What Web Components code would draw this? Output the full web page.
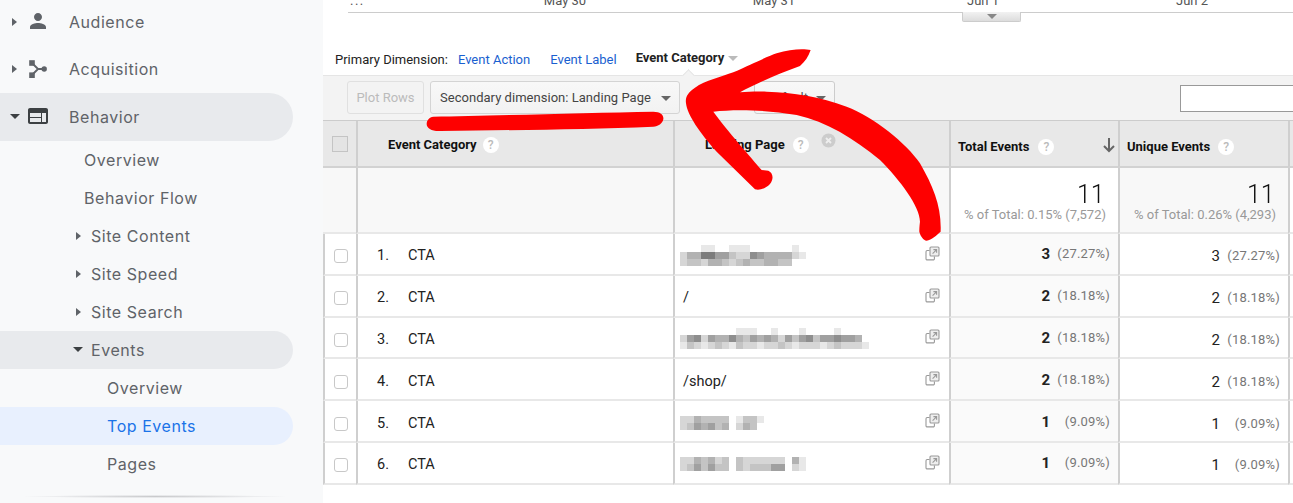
<!DOCTYPE html>
<html><head><meta charset="utf-8"><style>
html,body{margin:0;padding:0;height:503px;overflow:hidden;background:#fff}
body{display:flex;font-family:Roboto,"Liberation Sans",sans-serif;position:relative}
</style></head><body>
<ga-sidebar>
<ga-nav caret="right" icon="person" indent="0">Audience</ga-nav>
<ga-nav caret="right" icon="acq" indent="0">Acquisition</ga-nav>
<ga-nav caret="down" icon="web" indent="0" state="open">Behavior</ga-nav>
<ga-nav sub indent="84">Overview</ga-nav>
<ga-nav sub indent="84">Behavior Flow</ga-nav>
<ga-nav sub caret="right" indent="74">Site Content</ga-nav>
<ga-nav sub caret="right" indent="74">Site Speed</ga-nav>
<ga-nav sub caret="right" indent="74">Site Search</ga-nav>
<ga-nav sub caret="down" indent="72" state="open">Events</ga-nav>
<ga-nav sub indent="107">Overview</ga-nav>
<ga-nav sub indent="107" state="active">Top Events</ga-nav>
<ga-nav sub indent="107">Pages</ga-nav>
</ga-sidebar>
<ga-main>
<ga-axis></ga-axis>
<ga-dimensions></ga-dimensions>
<ga-toolbar></ga-toolbar>
<ga-table>
<ga-row n="1" m="3" p="27.27" mosaic="000110011100000010|244775532265444421|233244323433443300"></ga-row>
<ga-row n="2" m="2" p="18.18" page="/"></ga-row>
<ga-row n="3" m="2" p="18.18" mosaic="0000000011100100010000100000|2562544643545425356355655400|1321232132212232122212322210"></ga-row>
<ga-row n="4" m="2" p="18.18" page="/shop/"></ga-row>
<ga-row n="5" m="1" p="9.09" mosaic="224333301331|235453402430"></ga-row>
<ga-row n="6" m="1" p="9.09" mosaic="2243423032222220410|2353533032333550210"></ga-row>
</ga-table>
</ga-main>
<ga-annotation></ga-annotation>
<script>
const mk=(name,css,html,init)=>customElements.define(name,class extends HTMLElement{
  connectedCallback(){ if(this.shadowRoot) return; const r=this.attachShadow({mode:'open'});
    const h=typeof html==='function'?html(this):html;
    r.innerHTML=`<style>${css}</style>${h}`; init&&init(this,r);}
});
const icons={
person:'<path d="M12 12c2.21 0 4-1.79 4-4s-1.79-4-4-4-4 1.79-4 4 1.79 4 4 4zm0 2c-2.67 0-8 1.34-8 4v2h16v-2c0-2.66-5.33-4-8-4z" fill="#5f6368"/>',
acq:'<path d="M6.5 7.5 L12 13 H18 M12 13 L6.5 18.5" fill="none" stroke="#5f6368" stroke-width="1.8"/><rect x="3.2" y="4.2" width="5.6" height="5.6" fill="#5f6368"/><rect x="3.2" y="16.4" width="5.6" height="5.6" fill="#5f6368"/><circle cx="18.2" cy="13" r="2.7" fill="#5f6368"/>',
web:'<path d="M20 4H4c-1.1 0-1.99.9-1.99 2L2 18c0 1.1.9 2 2 2h16c1.1 0 2-.9 2-2V6c0-1.1-.9-2-2-2zm-5 14H4v-4h11v4zm0-5H4V9h11v4zm5 5h-4V9h4v9z" fill="#3c4043"/>'};

mk('ga-sidebar',`:host{display:block;flex:0 0 323px;width:323px;height:503px;background:#f8f9fa;position:relative;overflow:hidden}
.list{margin-top:-2px;display:flex;flex-direction:column}
.sh{position:absolute;left:25px;width:260px;top:495px;height:3px;background:radial-gradient(ellipse at center,#c9cacc 0,#e6e7e9 45%,rgba(248,249,250,0) 72%)}`,
`<div class="list"><slot></slot></div><div class="sh"></div>`);

mk('ga-nav',`:host{display:flex;align-items:center;width:293px;box-sizing:border-box;border-radius:0 24px 24px 0;color:#5f6368;font:400 16px/20px Inter,"Open Sans",sans-serif;letter-spacing:.55px;flex:none}
.car{width:0;height:0;flex:none}
.right{border-left:5px solid #5f6368;border-top:4.5px solid transparent;border-bottom:4.5px solid transparent}
.down{border-top:5px solid #3c4043;border-left:5px solid transparent;border-right:5px solid transparent}
svg{flex:none;display:block}`,
(e)=>{const sub=e.hasAttribute('sub'),ind=+e.getAttribute('indent'),c=e.getAttribute('caret'),ic=e.getAttribute('icon'),st=e.getAttribute('state');
 e.style.height=sub?'38px':'47.5px';
 if(st==='open')e.style.background='#e8eaed';
 if(st==='active'){e.style.background='#e8f0fe';e.style.color='#1a73e8';}
 let h='';
 if(!sub){h+=`<span class="car ${c}" style="margin-left:${c==='down'?10:12}px"></span><svg width="24" height="24" viewBox="0 0 24 24" style="margin-left:${c==='down'?6:9}px;margin-right:19px;position:relative;top:-1px">${icons[ic]}</svg>`;}
 else if(c){const x=c==='right'?76:73;h+=`<span class="car ${c}" style="margin-left:${x}px;margin-right:${c==='right'?10:8}px"></span>`;}
 else h+=`<span style="margin-left:${ind}px"></span>`;
 return h+'<slot></slot>';});

mk('ga-main',`:host{display:flex;flex-direction:column;flex:1;min-width:0;height:503px;overflow:hidden;position:relative;color:#222}`,`<slot></slot>`);

mk('ga-axis',`:host{display:block;height:13px;box-sizing:border-box;margin-left:25px;border-bottom:1px solid #ccc;position:relative}
.l{display:grid;grid-template-columns:112.5px 209px 209px 209px 209px;margin-top:-7px;box-sizing:border-box;font:400 13px/16px Roboto,sans-serif;color:#555}
.l span{text-align:center}.l span:first-child{text-align:left;padding-left:2px;letter-spacing:1.5px}
.tab{position:absolute;left:614px;top:12px;width:59px;height:10px;box-sizing:border-box;background:linear-gradient(#f2f2f2,#dcdcdc);border:1px solid #ccc;border-top:0;border-radius:0 0 2px 2px;display:flex;justify-content:center;padding-top:2px}
.tab i{width:0;height:0;border-top:5px solid #888;border-left:5px solid transparent;border-right:5px solid transparent}`,
`<div class="l"><span>...</span><span>May 30</span><span>May 31</span><span>Jun 1</span><span>Jun 2</span></div><div class="tab"><i></i></div>`);

mk('ga-dimensions',`:host{display:flex;align-items:center;height:62px;box-sizing:border-box;padding:32px 0 0 12px;font:400 13px/16px Roboto,sans-serif;color:#222}
a{color:#1a5fd0;text-decoration:none}
b{font-weight:700;font-size:13px;color:#222;position:relative;top:-2px;margin-left:19px}
i{width:0;height:0;border-top:5px solid #bbb;border-left:5px solid transparent;border-right:5px solid transparent;margin-left:4px;position:relative;top:-2px}`,
`<span>Primary Dimension:</span><a style="margin-left:10px">Event Action</a><a style="margin-left:20px">Event Label</a><b>Event Category</b><i></i>`);

mk('ga-toolbar',`:host{display:flex;height:45px;box-sizing:border-box;background:#f3f3f3;border-top:1px solid #e5e5e5;padding:5px 0 0 24px;position:relative;align-items:flex-start}
:host::before{content:"";position:absolute;left:361px;top:-5px;width:8px;height:8px;background:#f3f3f3;border-left:1px solid #e5e5e5;border-top:1px solid #e5e5e5;transform:rotate(45deg)}
.b{box-sizing:border-box;height:33px;border:1px solid #d4d4d4;border-radius:3px;display:flex;align-items:center;padding-top:1px;font:400 13px/16px Roboto,sans-serif;color:#444;background:linear-gradient(#f8f8f8,#f2f2f2);flex:none}
.plot{width:77px;justify-content:center;color:#bbb;background:#f3f3f3;border-color:#e0e0e0}
.sec{width:250px;margin-left:6px;padding:1px 8px 0 9px;justify-content:space-between;letter-spacing:.03px;color:#444}
.def{width:81px;margin-left:74px;padding-right:8px;justify-content:flex-end;color:#555;border-color:#ccc}
.def span{margin-right:8px}
i{width:0;height:0;border-top:5px solid #666;border-left:5px solid transparent;border-right:5px solid transparent;flex:none}
.in{box-sizing:border-box;margin:4px 0 0 345px;width:120px;height:27px;flex:none;border:1px solid #999;background:#fff}`,
`<div class="b plot">Plot Rows</div><div class="b sec"><span>Secondary dimension: Landing Page</span><i></i></div><div class="b def"><span>Default</span><i></i></div><div class="in"></div>`);

mk('ga-table',`:host{display:block;border-top:1px solid #ccc;--cols:33px 317px 276px 169px 170px 1fr;--line:#cfcfcf}
.r{display:grid;grid-template-columns:var(--cols)}
.r>div{box-sizing:border-box;border-left:2px solid var(--line);display:flex}
.r>div:first-child{border-left:0}
.h{height:47px}.h>div{background:#e8e8e8;border-bottom:2px solid #d2d2d2;align-items:center;font:700 13px/16px Roboto,sans-serif;color:#111}
.s{height:66px}.s>div{background:#f8f8f8;border-bottom:2px solid #e8e8e8;flex-direction:column;align-items:flex-end;justify-content:flex-start;padding:13px 12px 0 0}
.s>div.w{background:#fff}
.s b{font:300 25px/27px Roboto,sans-serif;color:#111;margin-right:1px;will-change:transform}
.s span{font:400 13px/17px Roboto,sans-serif;color:#999;margin-top:-2px;white-space:nowrap}
.q{display:inline-flex;width:16px;height:16px;border-radius:50%;background:#fff;color:#bbb;font:500 12px/16px Roboto,sans-serif;justify-content:center;flex:none}
.cb{width:16px;height:16px;box-sizing:border-box;border:1px solid #c4c4c4;background:#e4e4e4;margin-left:9px}
.x{flex:none;display:block}
svg{flex:none}`,
`<div class="r h">
<div><span class="cb"></span></div>
<div style="padding:2px 0 0 30px"><span>Event Category</span><span class="q" style="margin-left:6px">?</span></div>
<div style="padding:2px 0 0 30px"><span>Landing Page</span><span class="q" style="margin-left:8px">?</span>
 <svg class="x" width="15" height="15" viewBox="0 0 15 15" style="margin:-8px 0 0 12px"><circle cx="7.5" cy="7.5" r="7" fill="#ccc"/><path d="M5 5l5 5M10 5l-5 5" stroke="#eee" stroke-width="1.8"/></svg></div>
<div style="padding:7px 0 0 7px"><span>Total Events</span><span class="q" style="margin-left:9px">?</span>
 <svg width="14" height="16" viewBox="0 0 14 16" style="margin:-5px 0 0 48px"><path d="M7 1v13M2 9l5 5 5-5" fill="none" stroke="#666" stroke-width="2"/></svg></div>
<div style="padding:7px 0 0 7px"><span>Unique Events</span><span class="q" style="margin-left:8px">?</span></div>
<div></div></div>
<div class="r s"><div></div><div></div><div></div>
<div class="w"><b>11</b><span>% of Total: 0.15% (7,572)</span></div>
<div><b>11</b><span>% of Total: 0.26% (4,293)</span></div><div class="w" style="padding:0"></div></div>
<slot></slot>`);

const ext=`<svg width="15" height="15" viewBox="0 0 15 15" fill="none" stroke="#999" stroke-width="1.1"><path d="M4.5 4.5H2.2a1.2 1.2 0 0 0-1.2 1.2v7a1.2 1.2 0 0 0 1.2 1.2h6a1.2 1.2 0 0 0 1.2-1.2v-2.3"/><rect x="5" y="1" width="9" height="9" rx="1" fill="#eee"/><path d="M7.6 7.6L11.4 3.8M8.4 3.6h3.2v3.2"/></svg>`;
mk('ga-row',`:host{display:grid;grid-template-columns:var(--cols);height:41.8px;font:400 14.5px/18px Roboto,sans-serif;color:#222}
.c{box-sizing:border-box;border-bottom:2px solid #e8e8e8;padding-top:5px;display:flex;align-items:center;border-left:2px solid #cfcfcf;min-width:0}
.c:first-child{border-left:0;background:#f8f8f8}
.cb{width:14px;height:14px;box-sizing:border-box;border:1px solid #c8c8c8;border-radius:3px;background:#fff;margin-left:9px}
.idx{margin-left:19px;width:31px}
.page{justify-content:space-between;padding:5px 9px 0 5px}
.page .t{margin-left:3px}
.page svg{position:relative;top:-3px}
.page svg.mo{top:-1px}
.m{justify-content:flex-end;padding:5px 8px 0 0}
.m b,.m u{text-decoration:none;font-size:15px;text-align:right;width:10px}
.m b{font-weight:700}.m u{font-weight:400}
.m em{font-style:normal;font-size:13px;color:#777;width:60px;text-align:right;letter-spacing:.2px}
.tot{background:#fafafa}.tot b,.tot em{position:relative;top:-2px}
svg.mo{display:block}`,
(e)=>{const g=k=>e.getAttribute(k),p=g('page');
 let mid=p?`<span class="t">${p}</span>`:`<svg class="mo" id="mo"></svg>`;
 return `<div class="c"><span class="cb"></span></div><div class="c"><span class="idx">${g('n')}.</span><span>CTA</span></div>
 <div class="c page">${mid}${ext}</div>
 <div class="c m tot"><b>${g('m')}</b><em>(${g('p')}%)</em></div>
 <div class="c m"><u>${g('m')}</u><em>(${g('p')}%)</em></div><div class="c" style="background:#fff"></div>`;},
(e,r)=>{const m=e.getAttribute('mosaic');if(!m)return;const rows=m.split('|'),s=r.getElementById('mo'),w=rows[0].length*7,h=rows.length*7;
 s.setAttribute('width',w);s.setAttribute('height',h);s.setAttribute('viewBox',`0 0 ${w} ${h}`);
 let o='';rows.forEach((rw,y)=>[...rw].forEach((d,x)=>{const v=250-(+d)*18;if(+d)o+=`<rect x="${x*7}" y="${y*7}" width="7" height="7" fill="rgb(${v},${v},${v})"/>`}));s.innerHTML=o;});

const arrow=`M392 30C370 26 330 27 290 40C265 48 220 70 160 97C125 110 75 122 45 143C25 157 15 170 18 190C22 225 60 280 110 335L225 448C240 452 258 445 270 432C280 420 282 400 265 392L245 390C215 355 140 270 100 215C160 208 250 208 350 225C440 245 520 295 600 360C660 420 720 500 720 545C718 560 718 570 718 575C722 590 730 600 740 602C755 600 770 585 782 575C785 500 760 440 720 370C680 310 580 230 500 200C420 170 340 158 260 155C230 154 205 155 180 157C220 135 290 103 360 78C375 65 385 50 392 30Z`;
const line=`M40 140C200 138 500 128 700 125C722 125 732 135 730 148C728 160 715 170 700 170C500 178 300 180 60 183C35 184 20 175 20 162C20 150 28 142 40 140Z`;
mk('ga-annotation',`:host{position:absolute;left:0;top:0;width:1293px;height:503px;pointer-events:none;display:block}svg{display:block}`,
`<svg width="1293" height="503" viewBox="0 0 1293 503"><g transform="translate(680 40) scale(.3333)"><path d="${arrow}" fill="#fe0000"/></g><g transform="translate(420 70) scale(.3333)"><path d="${line}" fill="#fe0000"/></g></svg>`);
</script>
</body></html>
